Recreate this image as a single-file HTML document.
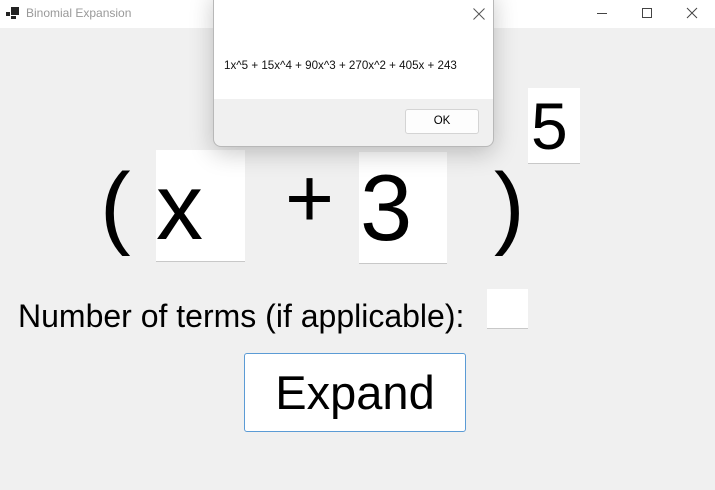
<!DOCTYPE html>
<html><head><style>
*{margin:0;padding:0;box-sizing:border-box}
body{width:715px;height:490px;background:#f0f0f0;position:relative;overflow:hidden;font-family:"Liberation Sans",Arial,sans-serif;color:#000}
.a{position:absolute;line-height:1;white-space:nowrap}
.box{position:absolute;background:#fff;border-bottom:1px solid #c8c8c8}
</style></head><body>
<div style="position:absolute;left:0;top:0;width:715px;height:28px;background:#fff"></div>
<svg style="position:absolute;left:6px;top:7px" width="14" height="13"><rect x="0" y="5" width="4" height="4" fill="#222"/><rect x="5" y="0" width="8" height="8" fill="#222"/><rect x="5" y="9" width="5" height="3" fill="#222"/></svg>
<div class="a" style="left:26px;top:7px;font-size:12px;color:#999">Binomial Expansion</div>
<svg style="position:absolute;left:590px;top:6px" width="115" height="14" stroke="#444" fill="none" stroke-width="1"><path d="M7 7.5H17"/><rect x="52.5" y="2.5" width="9" height="9"/><path d="M97 2L107 12M107 2L97 12"/></svg>

<div class="box" style="left:528px;top:88px;width:52px;height:76px"></div>
<div class="a" style="left:531px;top:93px;font-size:66px">5</div>

<div class="a" style="left:100px;top:160px;font-size:92px">(</div>
<div class="box" style="left:156px;top:150px;width:89px;height:112px"></div>
<div class="a" style="left:156px;top:160px;font-size:94px">x</div>
<div class="a" style="left:285px;top:156px;font-size:84px">+</div>
<div class="box" style="left:359px;top:152px;width:88px;height:112px"></div>
<div class="a" style="left:360px;top:161px;font-size:94px">3</div>
<div class="a" style="left:494px;top:160px;font-size:92px">)</div>

<div class="a" style="left:18px;top:300px;font-size:32px">Number of terms (if applicable):</div>
<div class="box" style="left:487px;top:289px;width:41px;height:40px"></div>

<div style="position:absolute;left:244px;top:353px;width:222px;height:79px;background:#fff;border:1px solid #5b9bd5;border-radius:3px;font-size:47px;text-align:center;line-height:77px">Expand</div>

<div style="position:absolute;left:213px;top:-10px;width:281px;height:157px;background:#f0f0f0;border:1px solid #b8b8b8;border-radius:8px;box-shadow:0 6px 24px rgba(0,0,0,0.22);overflow:hidden">
<div style="position:absolute;left:0;top:0;width:100%;height:108px;background:#fff"></div>
<svg style="position:absolute;left:259px;top:17px" width="12" height="12" stroke="#555" stroke-width="1"><path d="M0.5 0.5L11.5 11.5M11.5 0.5L0.5 11.5"/></svg>
<div class="a" style="left:10px;top:69px;font-size:11.6px;color:#111">1x^5 + 15x^4 + 90x^3 + 270x^2 + 405x + 243</div>
<div style="position:absolute;left:191px;top:118px;width:74px;height:25px;background:#fdfdfd;border:1px solid #d4d4d4;border-radius:3px;font-size:11.5px;text-align:center;line-height:23px">OK</div>
</div>
</body></html>
